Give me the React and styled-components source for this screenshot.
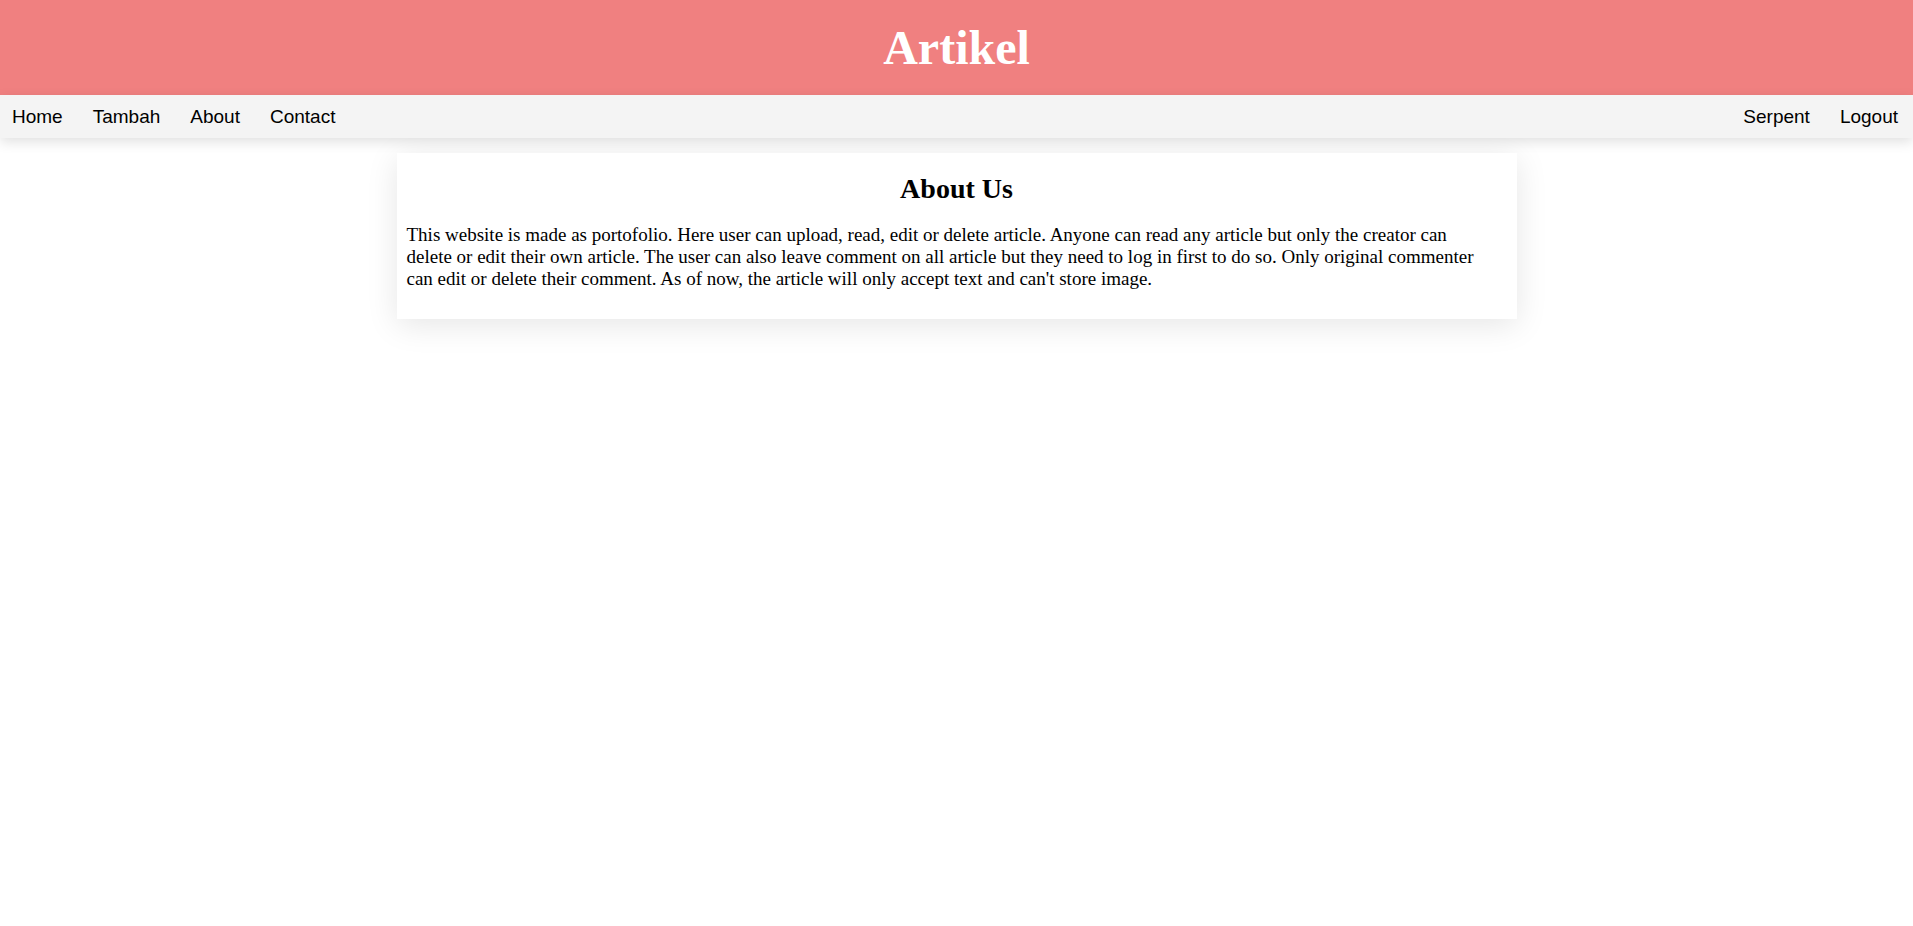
import React from 'react';
import styled, { createGlobalStyle } from 'styled-components';

const GlobalStyle = createGlobalStyle`
  html {
    overflow-y: scroll;
  }

  body {
    margin: 0;
    background-color: #ffffff;
    font-family: "Liberation Serif", "Times New Roman", serif;
    color: #000000;
  }

  ::-webkit-scrollbar {
    width: 12px;
    background-color: #f0f0f0;
  }

  ::-webkit-scrollbar-thumb {
    background-color: #cdcdcd;
  }

  ::-webkit-scrollbar-button:single-button {
    height: 15px;
    background-color: #f0f0f0;
  }
`;

const Header = styled.header`
  background-color: #f08080;
  padding: 20px;
  text-align: center;
`;

const Title = styled.h1`
  margin: 0;
  font-family: "Liberation Serif", "Times New Roman", serif;
  font-size: 48px;
  font-weight: bold;
  color: #ffffff;
`;

const NavBar = styled.nav`
  display: flex;
  justify-content: space-between;
  align-items: center;
  height: 43px;
  background-color: #f4f4f4;
  box-shadow: 0 4px 12px rgba(0, 0, 0, 0.12);
  position: relative;
  z-index: 1;
`;

const NavGroup = styled.div`
  display: flex;
  align-items: center;
  gap: 30px;
  padding: ${props => (props.right ? '0 15px 0 0' : '0 0 0 12px')};
`;

const NavLink = styled.a`
  font-family: "Liberation Sans", Arial, sans-serif;
  font-size: 19px;
  color: #000000;
  text-decoration: none;
  cursor: pointer;
`;

const Main = styled.main`
  min-height: 100vh;
  padding-top: 15px;
`;

const Card = styled.section`
  width: 1120px;
  margin: 0 auto;
  padding: 10px;
  box-sizing: border-box;
  background-color: #ffffff;
  box-shadow: 0 6px 30px rgba(0, 0, 0, 0.1);
`;

const CardTitle = styled.h2`
  margin: 10px 0;
  font-size: 28px;
  font-weight: bold;
  text-align: center;
`;

const CardText = styled.p`
  margin: 19px 0;
  padding-right: 12px;
  font-size: 19px;
  line-height: normal;
`;

const leftLinks = ['Home', 'Tambah', 'About', 'Contact'];
const rightLinks = ['Serpent', 'Logout'];

const App = () => {
  return (
    <>
      <GlobalStyle />
      <Header>
        <Title>Artikel</Title>
      </Header>
      <NavBar>
        <NavGroup>
          {leftLinks.map(link => (
            <NavLink key={link}>{link}</NavLink>
          ))}
        </NavGroup>
        <NavGroup right>
          {rightLinks.map(link => (
            <NavLink key={link}>{link}</NavLink>
          ))}
        </NavGroup>
      </NavBar>
      <Main>
        <Card>
          <CardTitle>About Us</CardTitle>
          <CardText>
            This website is made as portofolio. Here user can upload, read, edit or delete article. Anyone can read any article but only the creator can delete or edit their own article. The user can also leave comment on all article but they need to log in first to do so. Only original commenter can edit or delete their comment. As of now, the article will only accept text and can't store image.
          </CardText>
        </Card>
      </Main>
    </>
  );
};

export default App;
